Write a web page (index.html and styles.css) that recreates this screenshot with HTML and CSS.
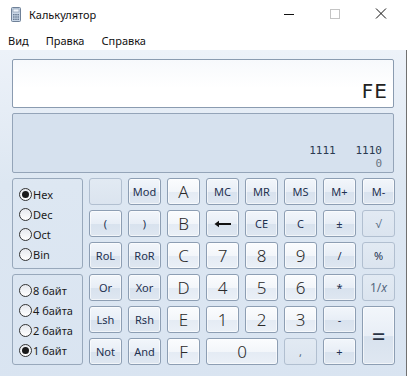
FILE: index.html
```html
<!DOCTYPE html>
<html lang="ru">

<head>
    <meta charset="UTF-8">
    <title>Калькулятор</title>
    <link rel="stylesheet" href="styles.css">
</head>

<body>
    <div class="titlebar">
        <svg class="app-icon" width="10" height="15" viewBox="0 0 10 15">
            <rect x="0.5" y="0.5" width="9" height="14" rx="1" fill="#c9d6e6" stroke="#6f8198"/>
            <rect x="2" y="2" width="6" height="3" fill="#eef4fb" stroke="#7f92a8" stroke-width="0.6"/>
            <g fill="#6a7d95">
                <rect x="2" y="7" width="1.6" height="1.4"/>
                <rect x="4.2" y="7" width="1.6" height="1.4"/>
                <rect x="6.4" y="7" width="1.6" height="1.4"/>
                <rect x="2" y="9.3" width="1.6" height="1.4"/>
                <rect x="4.2" y="9.3" width="1.6" height="1.4"/>
                <rect x="6.4" y="9.3" width="1.6" height="1.4"/>
                <rect x="2" y="11.6" width="1.6" height="1.4"/>
                <rect x="4.2" y="11.6" width="1.6" height="1.4"/>
                <rect x="6.4" y="11.6" width="1.6" height="1.4"/>
            </g>
        </svg>
        <span class="title">Калькулятор</span>
        <div class="controls">
            <svg width="46" height="30" viewBox="0 0 46 30"><path d="M18 14.5h10" stroke="#111" stroke-width="1"/></svg>
            <svg width="46" height="30" viewBox="0 0 46 30"><rect x="18.5" y="9.5" width="9" height="9" fill="none" stroke="#c4c4c4"/></svg>
            <svg width="46" height="30" viewBox="0 0 46 30"><path d="M18 8.5l10 10M28 8.5l-10 10" stroke="#111" stroke-width="1"/></svg>
        </div>
    </div>

    <div class="menubar">
        <span>Вид</span>
        <span>Правка</span>
        <span>Справка</span>
    </div>

    <div class="calc">
        <div class="display">FE</div>
        <div class="bits">
            <div class="bits-row">1111&nbsp;&nbsp;&nbsp;1110</div>
            <div class="bits-index">0</div>
        </div>

        <div class="keypad">
            <div class="side">
                <div class="panel">
                    <div class="radio checked"><span class="dot"></span>Hex</div>
                    <div class="radio"><span class="dot"></span>Dec</div>
                    <div class="radio"><span class="dot"></span>Oct</div>
                    <div class="radio"><span class="dot"></span>Bin</div>
                </div>
                <div class="panel">
                    <div class="radio"><span class="dot"></span>8 байт</div>
                    <div class="radio"><span class="dot"></span>4 байта</div>
                    <div class="radio"><span class="dot"></span>2 байта</div>
                    <div class="radio checked"><span class="dot"></span>1 байт</div>
                </div>
            </div>

            <div class="keys">
                <button class="key off"></button>
                <button class="key">Mod</button>
                <button class="key digit">A</button>
                <button class="key">MC</button>
                <button class="key">MR</button>
                <button class="key">MS</button>
                <button class="key">M+</button>
                <button class="key">M-</button>

                <button class="key">(</button>
                <button class="key">)</button>
                <button class="key digit">B</button>
                <button class="key"><svg width="18" height="8" viewBox="0 0 18 8"><path d="M4 4h13" stroke="#111" stroke-width="2"/><path d="M0.5 4L5 0.8v6.4z" fill="#111"/></svg></button>
                <button class="key">CE</button>
                <button class="key">C</button>
                <button class="key">±</button>
                <button class="key off">√</button>

                <button class="key">RoL</button>
                <button class="key">RoR</button>
                <button class="key digit">C</button>
                <button class="key digit">7</button>
                <button class="key digit">8</button>
                <button class="key digit">9</button>
                <button class="key">/</button>
                <button class="key off dark">%</button>

                <button class="key">Or</button>
                <button class="key">Xor</button>
                <button class="key digit">D</button>
                <button class="key digit">4</button>
                <button class="key digit">5</button>
                <button class="key digit">6</button>
                <button class="key">*</button>
                <button class="key off inv">1/<i>x</i></button>

                <button class="key">Lsh</button>
                <button class="key">Rsh</button>
                <button class="key digit">E</button>
                <button class="key digit">1</button>
                <button class="key digit">2</button>
                <button class="key digit">3</button>
                <button class="key">-</button>
                <button class="key equals">=</button>

                <button class="key">Not</button>
                <button class="key">And</button>
                <button class="key digit">F</button>
                <button class="key digit zero">0</button>
                <button class="key off">,</button>
                <button class="key">+</button>
            </div>
        </div>
    </div>
</body>

</html>
```

FILE: styles.css
```css
body {
    margin: 0;
    width: 408px;
    height: 376px;
    overflow: hidden;
    background-color: white;
    font-family: 'Noto Sans', 'Open Sans', sans-serif;
    color: #111;
}

.titlebar {
    display: flex;
    align-items: center;
    height: 30px;
}

.app-icon {
    margin-left: 11px;
    margin-top: -2px;
}

.title {
    margin-left: 8px;
    font-size: 11px;
    margin-top: -2px;
}

.controls {
    display: flex;
    margin-left: auto;
    margin-right: 4px;
}

.menubar {
    display: flex;
    height: 20px;
    align-items: center;
    font-size: 11px;
    padding-left: 8px;
    gap: 17px;
}

.calc {
    height: 326px;
    width: 382px;
    padding: 9px 12px 0 12px;
    border-right: 1px solid #707070;
    background: linear-gradient(#edf2f9, #dde7f2 40%, #d9e4f1);
}

.display {
    height: 47px;
    border: 1px solid #8a9bb0;
    border-radius: 2px;
    background: linear-gradient(#f7f9fc, #ffffff 60%);
    font-family: 'DejaVu Sans', sans-serif;
    font-size: 20px;
    letter-spacing: 1px;
    color: #222;
    text-align: right;
    padding-right: 5px;
    line-height: 62px;
    box-sizing: content-box;
}

.bits {
    margin-top: 5px;
    height: 58px;
    border: 1px solid #94a4b8;
    border-radius: 2px;
    background-color: #d6e1ee;
    padding-right: 11px;
    text-align: right;
    font-family: 'DejaVu Sans Mono', monospace;
    font-size: 11px;
    line-height: 13px;
    color: #2b3a50;
}

.bits-row {
    margin-top: 30px;
}

.bits-index {
    color: #6a7480;
}

.keypad {
    display: flex;
    gap: 6px;
    margin-top: 5px;
}

.side {
    display: flex;
    flex-direction: column;
    gap: 5px;
}

.panel {
    width: 71px;
    height: 91px;
    border: 1px solid #98a8bb;
    border-radius: 3px;
    padding-top: 5px;
    box-sizing: border-box;
}

.radio {
    display: flex;
    align-items: center;
    height: 20px;
    padding-left: 6px;
    font-size: 11px;
    color: #1b1b1b;
}

.dot {
    width: 11px;
    height: 11px;
    border: 1px solid #333;
    border-radius: 50%;
    background: linear-gradient(#e6e9ee, #ffffff);
    margin-right: 1px;
    display: flex;
    align-items: center;
    justify-content: center;
}

.checked .dot::after {
    content: '';
    width: 7px;
    height: 7px;
    border-radius: 50%;
    background-color: #1a1a1a;
}

.keys {
    display: grid;
    grid-template-columns: repeat(8, 33px);
    grid-auto-rows: 27px;
    column-gap: 6px;
    row-gap: 5px;
}

.key {
    display: flex;
    align-items: center;
    justify-content: center;
    padding: 0;
    margin: 0;
    border: 1px solid #8d9eb3;
    border-radius: 3px;
    background: linear-gradient(#f2f6fb, #e8eef6 50%, #d8e2ee 52%, #dfe7f1);
    box-shadow: inset 0 0 0 1px rgba(255, 255, 255, 0.6);
    font-family: 'Noto Sans', 'Open Sans', sans-serif;
    font-size: 11px;
    color: #1e3150;
}

.digit {
    background: linear-gradient(#fbfcfe, #f3f6fa 50%, #e4ebf4 52%, #eaf0f7);
    font-size: 17px;
    font-weight: 300;
    color: #2a2a2a;
}

.zero {
    grid-column: span 2;
}

.equals {
    grid-row: span 2;
    font-size: 24px;
    color: #2a3444;
}

.off {
    background: linear-gradient(#e2eaf3, #dbe4ef);
    border-color: #b1bfd0;
    box-shadow: none;
    color: #55687f;
}

.dark {
    color: #1e3150;
}

.inv {
    font-size: 12px;
}
```
